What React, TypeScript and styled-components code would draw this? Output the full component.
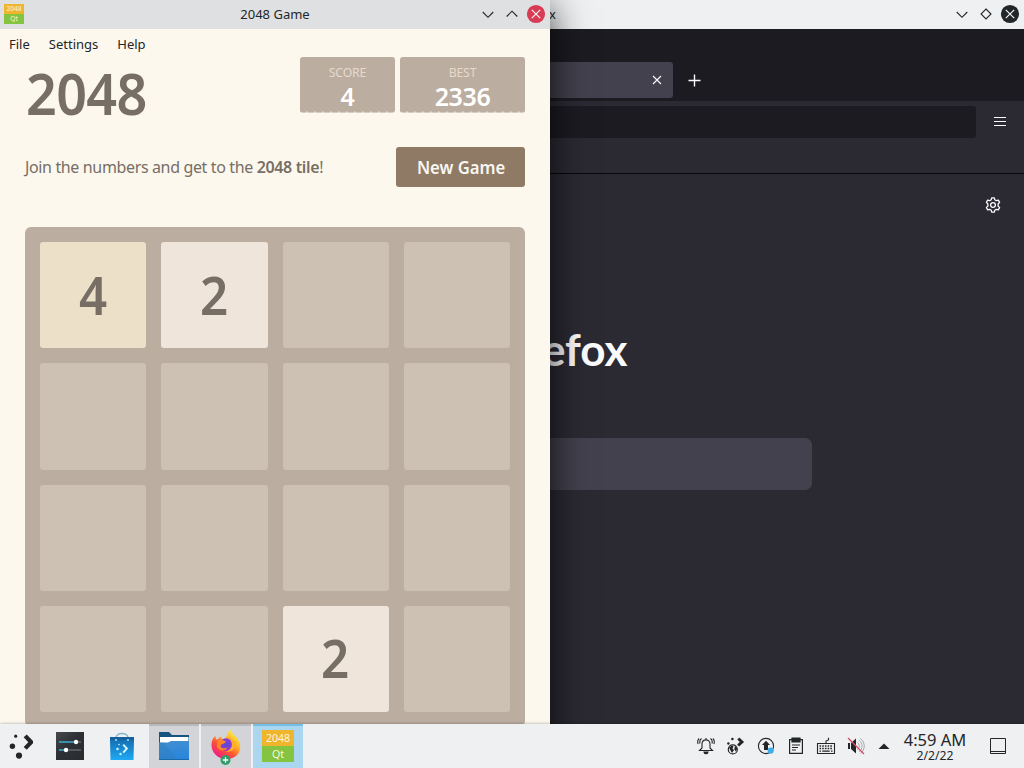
import React from 'react';
import styled, { createGlobalStyle } from 'styled-components';

const Global = createGlobalStyle`
  * { box-sizing: border-box; }
  body { margin: 0; background: #2b2a33; overflow: hidden; }
  svg { display: block; flex: none; }
`;

const Desktop = styled.div`
  position: relative;
  width: 1024px;
  height: 768px;
  overflow: hidden;
  font-family: 'Noto Sans', sans-serif;
  font-size: 13px;
  color: #232629;
`;

const Window = styled.section<{ $width: number; $active?: boolean }>`
  position: absolute;
  top: 0;
  left: 0;
  width: ${p => p.$width}px;
  height: 768px;
  display: flex;
  flex-direction: column;
  background: ${p => (p.$active ? '#fcf8ee' : '#2b2a33')};
  box-shadow: ${p => (p.$active ? '0 8px 36px rgba(0, 0, 0, 0.8)' : 'none')};
`;

const TitleBar = styled.header<{ $active?: boolean }>`
  height: 29px;
  flex: none;
  display: grid;
  grid-template-columns: 1fr auto 1fr;
  align-items: center;
  padding: 0 4px 1px;
  background: ${p => (p.$active ? '#dee0e2' : '#eff0f1')};
`;

const Title = styled.span`
  line-height: 28px;
  white-space: nowrap;
`;

const WindowButtons = styled.div`
  display: flex;
  justify-content: flex-end;
  gap: 4px;
`;

/* Browser */
const TabStrip = styled.div`
  height: 72px;
  flex: none;
  display: flex;
  align-items: flex-end;
  padding-bottom: 3px;
  background: #1c1b22;
`;

const Tab = styled.div`
  width: 673px;
  height: 36px;
  display: flex;
  justify-content: flex-end;
  align-items: center;
  padding-right: 11px;
  border-radius: 3px;
  background: #42414d;
`;

const NewTab = styled.div`
  height: 36px;
  display: flex;
  align-items: center;
  margin-left: 15px;
`;

const NavBar = styled.div`
  height: 73px;
  flex: none;
  display: flex;
  align-items: flex-start;
  justify-content: space-between;
  padding: 5px 18px 0 0;
  border-bottom: 1px solid #08080a;
  background: #2b2a33;
`;

const UrlField = styled.div`
  width: 976px;
  height: 32px;
  border-radius: 3px;
  background: #1c1b22;
`;

const NewTabPage = styled.main`
  flex: 1;
  display: flex;
  flex-direction: column;
  align-items: center;
`;

const PageTools = styled.div`
  align-self: stretch;
  display: flex;
  justify-content: flex-end;
  padding: 23px 23px 0 0;
`;

const Wordmark = styled.div`
  width: 231px;
  margin-top: 106px;
  height: 60px;
  line-height: 60px;
  text-align: right;
  font-family: Lato, sans-serif;
  font-weight: 700;
  font-size: 44px;
  color: #fbfbfe;
`;

const SearchBox = styled.div`
  width: 600px;
  height: 52px;
  margin-top: 59px;
  border-radius: 7px;
  background: #42414d;
`;

/* Game */
const MenuBar = styled.nav`
  height: 28px;
  flex: none;
  display: flex;
  gap: 19px;
  padding: 1px 9px 0;
  line-height: 28px;
`;

const GameBody = styled.main`
  display: flex;
  flex-direction: column;
  width: 500px;
  margin-left: 25px;
  color: #776e65;
`;

const Heading = styled.div`
  height: 90px;
  display: flex;
  justify-content: space-between;
`;

const GameTitle = styled.h1`
  margin: 0 0 0 1px;
  font-size: 57px;
  line-height: 73px;
  font-weight: 650;
  letter-spacing: -0.7px;
  transform: scaleX(0.945);
  transform-origin: left;
`;

const Scores = styled.div`
  display: flex;
  gap: 5px;
`;

const ScoreBox = styled.div<{ $width: number }>`
  width: ${p => p.$width}px;
  height: 56px;
  display: flex;
  flex-direction: column;
  align-items: center;
  border-radius: 3px;
  background:
    repeating-linear-gradient(90deg, #d8cdc2 0 6px, #e9e1d7 6px 8px) bottom / 100% 1px no-repeat,
    repeating-linear-gradient(90deg, #bbada0 0 6px, #cfc4b8 6px 8px) 0 100% / 100% 2px no-repeat,
    #bbada0;
  color: #fff;
`;

const ScoreLabel = styled.span`
  margin-top: 7px;
  font-size: 12.3px;
  line-height: 17px;
  letter-spacing: -0.2px;
  color: #e6dacd;
`;

const ScoreValue = styled.span`
  font-size: 25px;
  line-height: 31px;
  font-weight: 600;
  letter-spacing: -0.4px;
`;

const Intro = styled.div`
  height: 80px;
  display: flex;
  justify-content: space-between;
`;

const Tagline = styled.p`
  margin: 0;
  line-height: 40px;
  font-size: 16px;
  letter-spacing: -0.36px;
  white-space: nowrap;
  b { font-weight: 600; }
`;

const NewGame = styled.button`
  width: 129px;
  height: 40px;
  padding: 0 0 0 1px;
  border: 0;
  border-radius: 3px;
  background: #8f7a66;
  color: #f9f6f2;
  font: 600 18.5px/40px 'Noto Sans', sans-serif;
  span { display: inline-block; transform: scaleX(0.9); }
`;

const Board = styled.div`
  width: 500px;
  height: 500px;
  padding: 15px;
  display: grid;
  grid-template: repeat(4, 1fr) / repeat(4, 1fr);
  gap: 15px;
  border-radius: 6px;
  background: #bbada0;
`;

const tileColors: Record<number, string> = { 0: '#cdc1b4', 2: '#efe5db', 4: '#ede0c8' };

const Tile = styled.div<{ $value: number }>`
  display: flex;
  align-items: center;
  justify-content: center;
  padding-bottom: 2px;
  border-radius: 3px;
  background: ${p => tileColors[p.$value]};
  font-size: 53px;
  line-height: 1;
  font-weight: 650;
  span { transform: scaleX(0.93); }
`;

/* Panel */
const Panel = styled.footer`
  position: absolute;
  left: 0;
  right: 0;
  bottom: 0;
  height: 44px;
  display: flex;
  justify-content: space-between;
  background: #eff0f1;
  box-shadow: 0 0 3px rgba(0, 0, 0, 0.35);
`;

const Launchers = styled.div`
  display: flex;
  gap: 2px;
`;

const Launcher = styled.div<{ $state?: 'open' | 'active' }>`
  width: 50px;
  height: 44px;
  display: flex;
  align-items: center;
  justify-content: center;
  padding-bottom: 2px;
  border-top: 2px solid ${p => (p.$state === 'active' ? '#73bfe6' : p.$state ? '#b9babe' : 'transparent')};
  background: ${p => (p.$state === 'active' ? '#aad7ef' : p.$state ? '#d3d4d7' : 'transparent')};
`;

const Kicker = styled(Launcher)`
  width: 43px;
  padding: 0 1px 3px 0;
`;

const Tray = styled.div`
  display: flex;
  align-items: center;
  padding-right: 17px;
`;

const TrayCell = styled.div<{ $width?: number }>`
  width: ${p => p.$width ?? 30}px;
  display: flex;
  justify-content: center;
`;

const Clock = styled.time`
  width: 66px;
  margin: 2px 21px 0 5px;
  display: flex;
  flex-direction: column;
  align-items: center;
  white-space: nowrap;
  font-size: 16.5px;
  line-height: 17px;
`;

const ClockDate = styled.span`
  font-size: 12.2px;
  line-height: 15px;
`;

const GameIconBox = styled.div<{ $size: number }>`
  width: ${p => p.$size}px;
  height: ${p => p.$size}px;
  display: grid;
  grid-template-rows: 1fr 1fr;
  text-align: center;
  color: #fdf6dc;
  font-size: ${p => p.$size * 0.33}px;
  line-height: ${p => p.$size / 2}px;
  background: linear-gradient(#efb52d 50%, #84c441 50%);
`;

const GameIcon = ({ size }: { size: number }) => (
  <GameIconBox $size={size}><span>2048</span><span>Qt</span></GameIconBox>
);

const Chevron = ({ up }: { up?: boolean }) => (
  <svg width="20" height="20" viewBox="0 0 20 20" fill="none" stroke="#232629" strokeWidth="1.1">
    <path d={up ? 'M4.7 12.5 10 7.2l5.3 5.3' : 'M4.7 8 10 13.3 15.3 8'} />
  </svg>
);

const Diamond = () => (
  <svg width="20" height="20" viewBox="0 0 20 20" fill="none" stroke="#232629" strokeWidth="1.1">
    <path d="m10 5 5 5-5 5-5-5z" />
  </svg>
);

const CloseButton = ({ color }: { color: string }) => (
  <svg width="20" height="20" viewBox="0 0 20 20">
    <circle cx="10" cy="10" r="9.1" fill={color} />
    <path d="m5.8 5.8 8.4 8.4m0-8.4-8.4 8.4" stroke="#fcfcfc" strokeWidth="1.1" />
  </svg>
);

const MenuIcon = () => (
  <svg width="12" height="32" viewBox="0 0 12 32" stroke="#fbfbfe" strokeWidth="1.1">
    <path d="M0 11.500h12M0 15.500h12M0 19.500h12" />
  </svg>
);

const Gear = () => (
  <svg width="16" height="16" viewBox="0 0 16 16" fill="none" stroke="#fbfbfe" strokeWidth="1.3" strokeLinejoin="round">
    <path d="M6.7.8h2.600l.5 2 1.500.9 2-.6 1.300 2.300L13.100 7v2l1.500 1.600-1.300 2.300-2-.6-1.500.9-.5 2H6.700l-.5-2-1.500-.9-2 .6-1.300-2.300L2.900 9V7L1.400 5.400l1.300-2.300 2 .6 1.500-.9z" />
    <circle cx="8" cy="8" r="2.4" />
  </svg>
);

const KickerIcon = () => (
  <svg width="24" height="26" viewBox="0 0 24 26" fill="#232629">
    <circle cx="6.7" cy="3.2" r="1.6" /><circle cx="3.4" cy="13.2" r="2.7" /><circle cx="10" cy="22.6" r="3.1" />
    <path d="m16.2 2.9 6 6.3-6 6.2" fill="none" stroke="#232629" strokeWidth="4.2" />
  </svg>
);

const SettingsIcon = () => (
  <svg width="28" height="28" viewBox="0 0 28 28">
    <defs><linearGradient id="dark" x2="1" y2="1"><stop stopColor="#46494d" /><stop offset=".45" stopColor="#2d3135" /><stop offset="1" stopColor="#292c2f" /></linearGradient></defs>
    <path d="M0 0h28v28H0z" fill="url(#dark)" />
    <path d="M3 10h16M3 18h6" stroke="#3daed0" strokeWidth="1.7" />
    <path d="M22 10h3M11 18h14" stroke="#62676b" strokeWidth="1.5" />
    <circle cx="20" cy="10" r="2.2" fill="#fff" /><circle cx="10" cy="18" r="2.2" fill="#fff" />
  </svg>
);

const StoreIcon = () => (
  <svg width="26" height="30" viewBox="0 0 26 30">
    <defs><linearGradient id="bag" x2="0" y2="1"><stop stopColor="#1467aa" /><stop offset="1" stopColor="#1eaaf4" /></linearGradient></defs>
    <path d="M7 9V7c0-6 12-6 12 0v2" fill="none" stroke="#83b6ce" strokeWidth="1.5" />
    <path d="M1 6h24v3l-.5 20h-23L1 9z" fill="url(#bag)" />
    <path d="M1 6h24v3H1z" fill="#1760a0" />
    <circle cx="7" cy="9" r=".9" fill="#b8ecff" /><circle cx="19" cy="9" r=".9" fill="#b8ecff" />
    <g fill="#c8f1ff"><circle cx="10" cy="13.5" r=".8" /><circle cx="8.5" cy="18" r="1.3" /><circle cx="11.5" cy="23" r="1.2" /></g>
    <path d="m14.2 13.6 3.6 4-3.6 4" fill="none" stroke="#d6f5ff" strokeWidth="2" />
  </svg>
);

const FolderIcon = () => (
  <svg width="30" height="28" viewBox="0 0 30 28">
    <defs><linearGradient id="folder" x2="0" y2="1"><stop stopColor="#418ed2" /><stop offset="1" stopColor="#2685dc" /></linearGradient></defs>
    <path d="M0 0h10l3 3h17v18H0z" fill="#175581" />
    <path d="M1 5h28.500v8H1z" fill="#fff" />
    <path d="M0 10.500h9l3-1.500h18v19H0z" fill="url(#folder)" />
    <path d="M0 10.500h4L19 28H0z" fill="#367cb8" opacity=".45" />
    <path d="M0 27h30v1H0z" fill="#1b68a8" />
  </svg>
);

const FirefoxIcon = () => (
  <svg width="32" height="38" viewBox="0 0 32 38">
    <defs>
      <linearGradient id="flame" x1=".85" x2=".2" y1=".05" y2=".95"><stop stopColor="#fff13e" /><stop offset=".35" stopColor="#ffb52a" /><stop offset=".65" stopColor="#ff5235" /><stop offset="1" stopColor="#ee198c" /></linearGradient>
      <radialGradient id="globe"><stop stopColor="#524bd5" /><stop offset="1" stopColor="#9738d8" /></radialGradient>
    </defs>
    <g transform="translate(.5 2) scale(.97)">
      <path d="M5 7c0 2 .6 3 1.4 4l4.5-3.2c.5 1.5 1.2 2.8 2.5 3.6L17 7c1-4.5 3-6 4-6 .3 4 4.3 5.6 6.3 8.2 5 6.6 4.3 14.3-.8 18.3-6 5-15.8 4.5-21-.6C-.4 21-.3 12.2 5 7Z" fill="url(#flame)" />
      <circle cx="16" cy="16" r="6.5" fill="url(#globe)" />
      <path d="M7 12c4-2 6-.5 9 1-1 3-6 2-5.500 5 1 3 5 2 7 .8-1 4-8.500 5-11-1z" fill="#ff8626" />
      <path d="M23 11c-4-4-6-3-7-2 3 0 6 2 6 7 0 4-3 7-7 7 6 2 12-3 11-9z" fill="#ffaf28" />
    </g>
    <circle cx="15.500" cy="33" r="5" fill="#2d9c69" />
    <path d="M15.500 30.200v5.600M12.700 33h5.600" stroke="#effff7" strokeWidth="1.3" />
  </svg>
);

const BellIcon = () => (
  <svg width="18" height="18" viewBox="0 0 18 18" fill="none" stroke="#232629" strokeWidth="1.1">
    <path d="M2.500 13.500h13L13 11V7c0-5.500-8-5.500-8 0v4l-2.500 2.500ZM9 1v2M4.500 1.500C3 2.500 2.500 4.500 3 6.500M2 1.500C.5 3 .5 5 1 7M13.500 1.500c1.500 1 2 3 1.500 5m1-5c1.500 1.500 1.500 3.500 1 5.500" />
    <path d="M7 15h4c-.6 2.400-3.400 2.400-4 0Z" fill="#232629" />
  </svg>
);

const NetworkIcon = () => (
  <svg width="20" height="18" viewBox="0 0 20 18">
    <circle cx="6.8" cy="12.4" r="4.5" fill="#eff0f1" stroke="#232629" strokeWidth="1.2" />
    <path d="m3 10.500 3-2 1.500 1-1 2 1.500 1.500-2 3-1.500-2.500zM9 8.500l2.300 3-1.500 3-1.500-2z" fill="#232629" />
    <g fill="#232629"><circle cx="6.4" cy="2" r="1.3" /><circle cx="2.4" cy="6.5" r="1.2" /></g>
    <path d="m12.300 1.500 3.600 3.500-3.800 3.500" fill="none" stroke="#232629" strokeWidth="3" />
  </svg>
);

const UpdateIcon = () => (
  <svg width="18" height="18" viewBox="0 0 18 18">
    <circle cx="9" cy="9" r="7.6" fill="none" stroke="#232629" strokeWidth="1.1" />
    <path d="m9 3.700 4 4.300h-2v5H7V8H5z" fill="#232629" />
    <circle cx="13.7" cy="13.6" r="3.1" fill="#3daee9" />
  </svg>
);

const ClipboardIcon = () => (
  <svg width="16" height="18" viewBox="0 0 16 18" fill="none" stroke="#232629" strokeWidth="1.2">
    <path d="M1.600 2.600h12.800v13.800H1.600z" /><path d="M4 1h8v4H4z" fill="#232629" />
    <path d="M4 8h8M4 10.500h6M4 13h4" />
  </svg>
);

const KeyboardIcon = () => (
  <svg width="20" height="18" viewBox="0 0 20 18" fill="none" stroke="#232629" strokeWidth="1.1">
    <path d="M1.500 6.500h17v10h-17zM10 6.500V4l2.500-1V.8" />
    <path d="M3.500 9h13M3.500 11.500h13" strokeDasharray="1.6 1.1" strokeWidth="1.5" />
    <path d="M3.500 14.200H5m1.300 0h7.400m1.300 0h1.500" strokeWidth="1.3" />
  </svg>
);

const MutedIcon = () => (
  <svg width="18" height="18" viewBox="0 0 18 18">
    <path d="M1 6h2v6H1zm3 0 5-4.500v15L4 12z" fill="#232629" />
    <path d="M10.500 5.500c2.300 1.800 2.300 5.200 0 7M12 3.200c4 2.600 4 9 0 11.600M13.500 1.500c5 4 5 11 0 15" fill="none" stroke="#a5aaad" strokeWidth="1" />
    <path d="m1 1 16 16" stroke="#d64c63" strokeWidth="1.3" />
  </svg>
);

const board = [4, 2, 0, 0, 0, 0, 0, 0, 0, 0, 0, 0, 0, 0, 2, 0];

const Browser = () => (
  <Window $width={1024}>
    <TitleBar>
      <span />
      <Title>Mozilla Firefox</Title>
      <WindowButtons><Chevron /><Diamond /><CloseButton color="#232629" /></WindowButtons>
    </TitleBar>
    <TabStrip>
      <Tab>
        <svg width="10" height="10" viewBox="0 0 10 10" stroke="#fbfbfe" strokeWidth="1.1"><path d="m1 1 8 8m0-8L1 9" /></svg>
      </Tab>
      <NewTab>
        <svg width="13" height="13" viewBox="0 0 13 13" stroke="#fbfbfe" strokeWidth="1.4"><path d="M6.500.5v12m-6-6h12" /></svg>
      </NewTab>
    </TabStrip>
    <NavBar>
      <UrlField />
      <MenuIcon />
    </NavBar>
    <NewTabPage>
      <PageTools><Gear /></PageTools>
      <Wordmark>Firefox</Wordmark>
      <SearchBox />
    </NewTabPage>
  </Window>
);

const Game = () => (
  <Window $width={550} $active>
    <TitleBar $active>
      <GameIcon size={20} />
      <Title>2048 Game</Title>
      <WindowButtons><Chevron /><Chevron up /><CloseButton color="#d93a54" /></WindowButtons>
    </TitleBar>
    <MenuBar><span>File</span><span>Settings</span><span>Help</span></MenuBar>
    <GameBody>
      <Heading>
        <GameTitle>2048</GameTitle>
        <Scores>
          <ScoreBox $width={95}><ScoreLabel>SCORE</ScoreLabel><ScoreValue>4</ScoreValue></ScoreBox>
          <ScoreBox $width={125}><ScoreLabel>BEST</ScoreLabel><ScoreValue>2336</ScoreValue></ScoreBox>
        </Scores>
      </Heading>
      <Intro>
        <Tagline>Join the numbers and get to the <b>2048 tile</b>!</Tagline>
        <NewGame><span>New Game</span></NewGame>
      </Intro>
      <Board>{board.map((value, i) => <Tile key={i} $value={value}>{value > 0 && <span>{value}</span>}</Tile>)}</Board>
    </GameBody>
  </Window>
);

const Taskbar = () => (
  <Panel>
    <Launchers>
      <Kicker><KickerIcon /></Kicker>
      <Launcher><SettingsIcon /></Launcher>
      <Launcher><StoreIcon /></Launcher>
      <Launcher $state="open"><FolderIcon /></Launcher>
      <Launcher $state="open"><FirefoxIcon /></Launcher>
      <Launcher $state="active"><GameIcon size={32} /></Launcher>
    </Launchers>
    <Tray>
      <TrayCell><BellIcon /></TrayCell>
      <TrayCell><NetworkIcon /></TrayCell>
      <TrayCell><UpdateIcon /></TrayCell>
      <TrayCell><ClipboardIcon /></TrayCell>
      <TrayCell><KeyboardIcon /></TrayCell>
      <TrayCell><MutedIcon /></TrayCell>
      <TrayCell $width={26}>
        <svg width="12" height="8" viewBox="0 0 12 8"><path d="m.5 7 5.500-5.500L11.500 7z" fill="#232629" /></svg>
      </TrayCell>
      <Clock><span>4:59 AM</span><ClockDate>2/2/22</ClockDate></Clock>
      <svg width="18" height="18" viewBox="0 0 18 18" fill="none" stroke="#232629"><path d="M1.500 1.500h15v15h-15zM1.500 14.500h15" /></svg>
    </Tray>
  </Panel>
);

export default function App() {
  return (
    <>
      <Global />
      <Desktop>
        <Browser />
        <Game />
        <Taskbar />
      </Desktop>
    </>
  );
}
